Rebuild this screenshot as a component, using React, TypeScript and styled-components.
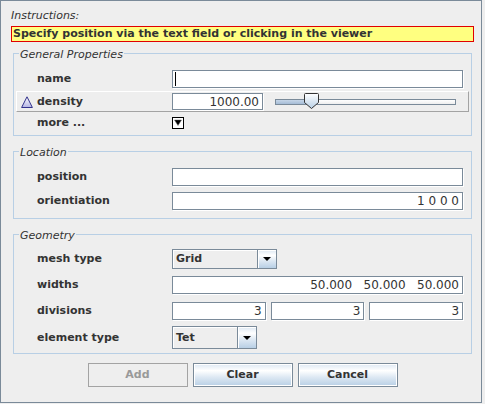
import React from 'react';
import styled, { createGlobalStyle } from 'styled-components';

const Global = createGlobalStyle`
  html, body { margin: 0; padding: 0; background: #eeeeee; }
  body { font-family: "DejaVu Sans", sans-serif; color: #333333; }
  * { box-sizing: border-box; }
`;

const Dialog = styled.div`
  width: 482px;
  height: 403px;
  border: 1px solid #7a8a99;
  background: #eeeeee;
  padding: 7px 7px 0 10px;
  display: flex;
  flex-direction: column;
`;

const Caption = styled.div`
  font: italic 11px/16px "DejaVu Sans", sans-serif;
  color: #333333;
  height: 16px;
  margin-bottom: 2px;
`;

const Banner = styled.div`
  height: 16px;
  border: 1px solid #e00000;
  background: #ffff80;
  font: bold 11px/14px "DejaVu Sans", sans-serif;
  color: #333333;
  padding-left: 1px;
  white-space: nowrap;
`;

const Group = styled.fieldset<{ $mt: number }>`
  margin: ${p => p.$mt}px 2px 0;
  padding: 0;
  border: 1px solid #b8cfe5;
  min-width: 0;
`;

const Title = styled.legend`
  font: italic 11px/14px "DejaVu Sans", sans-serif;
  color: #333333;
  padding: 4px 1px 0;
  margin-left: 5px;
`;

const Body = styled.div<{ $pt: number; $pb: number }>`
  display: flex;
  flex-direction: column;
  padding: ${p => p.$pt}px 0 ${p => p.$pb}px;
`;

const Row = styled.div<{ $h: number; $mt?: number }>`
  display: flex;
  align-items: center;
  height: ${p => p.$h}px;
  margin-top: ${p => p.$mt ?? 0}px;
  padding: 0 8px 0 23px;
`;

const HighlightRow = styled.div<{ $mt?: number }>`
  display: flex;
  align-items: center;
  height: 21px;
  margin: ${p => p.$mt ?? 0}px 2px 0;
  border: 1px solid;
  border-color: #ffffff #a3a3a3 #a3a3a3 #ffffff;
  padding-left: 4px;
`;

const Label = styled.span`
  flex: none;
  width: 135px;
  font: bold 11px/14px "DejaVu Sans", sans-serif;
  color: #333333;
  white-space: nowrap;
`;

const IconBox = styled.span`
  display: flex;
  width: 12px;
  height: 12px;
  margin-right: 4px;
`;

const Field = styled.div<{ $w?: number; $h?: number }>`
  flex: ${p => (p.$w ? 'none' : '1 1 0')};
  width: ${p => (p.$w ? `${p.$w}px` : 'auto')};
  height: ${p => p.$h ?? 18}px;
  background: #ffffff;
  border: 1px solid #7a8a99;
  box-shadow: 1px 1px 0 #ffffff;
  font: 12px/16px "DejaVu Sans", sans-serif;
  color: #333333;
  text-align: right;
  padding: 0 3px;
  white-space: pre;
  overflow: hidden;
`;

const Caret = styled.span`
  display: block;
  width: 1px;
  height: 14px;
  margin: 1px 0 0 -1px;
  background: #000000;
`;

const FieldGroup = styled.div`
  flex: 1;
  display: flex;
  gap: 5px;
`;

const Combo = styled.div<{ $w: number; $h: number }>`
  display: flex;
  width: ${p => p.$w}px;
  height: ${p => p.$h}px;
  border: 1px solid #7a8a99;
`;

const ComboText = styled.div`
  flex: 1;
  display: flex;
  align-items: center;
  padding-left: 3px;
  background: #eeeeee;
  box-shadow: inset 1px 1px 0 #ffffff;
  font: bold 11px/14px "DejaVu Sans", sans-serif;
  color: #333333;
`;

const ComboButton = styled.div`
  width: 19px;
  flex: none;
  display: flex;
  align-items: center;
  justify-content: center;
  border-left: 1px solid #7a8a99;
  box-shadow: inset 1px 1px 0 #ffffff;
  background: linear-gradient(#dde8f3 0%, #ffffff 30%, #dde8f3 60%, #b8cfe5 100%);
`;

const Slider = styled.div`
  position: relative;
  margin-left: 12px;
  width: 181px;
  height: 19px;
  display: flex;
  align-items: center;
`;

const Track = styled.div`
  display: flex;
  width: 181px;
  height: 6px;
  border: 1px solid #7a8a99;
  background: linear-gradient(#ffffff, #eeeeee);
`;

const TrackFill = styled.div`
  height: 100%;
  background: linear-gradient(#c6d6e8, #a5bcd6);
`;

const Thumb = styled.svg`
  position: absolute;
  top: 1px;
  width: 15px;
  height: 16px;
`;

const ButtonBar = styled.div`
  display: flex;
  justify-content: center;
  gap: 5px;
  margin-top: 9px;
`;

const Button = styled.div<{ $disabled?: boolean }>`
  width: 100px;
  height: 24px;
  display: flex;
  align-items: center;
  justify-content: center;
  font: bold 11px/14px "DejaVu Sans", sans-serif;
  border: 1px solid ${p => (p.$disabled ? '#a3a3a3' : '#7a8a99')};
  color: ${p => (p.$disabled ? '#999999' : '#333333')};
  background: ${p =>
    p.$disabled
      ? '#eeeeee'
      : 'linear-gradient(#dde8f3 0%, #ffffff 30%, #dde8f3 60%, #b8cfe5 100%)'};
  box-shadow: ${p => (p.$disabled ? 'none' : 'inset 0 0 0 1px #ffffff')};
`;

const Arrow = () => (
  <svg width="8" height="4" viewBox="0 0 8 4">
    <polygon points="0,0 8,0 4,4" fill="#000" />
  </svg>
);

const DeltaIcon = () => (
  <svg width="12" height="12" viewBox="0 0 12 12">
    <defs>
      <linearGradient id="dg" x1="0" y1="0" x2="0" y2="1">
        <stop offset="0" stopColor="#ffffff" />
        <stop offset="1" stopColor="#b4b4e4" />
      </linearGradient>
    </defs>
    <polygon points="6,0.8 11.4,11.5 0.6,11.5" fill="url(#dg)" stroke="#33338c" strokeWidth="1" />
  </svg>
);

const ToggleIcon = () => (
  <svg width="12" height="12" viewBox="0 0 12 12">
    <rect x="0.5" y="0.5" width="11" height="11" fill="#ffffff" stroke="#000000" />
    <polygon points="2.5,3 9.5,3 6,8.5" fill="#000000" stroke="#666" strokeWidth="0.5" />
  </svg>
);

function DensitySlider({ value }: { value: number }) {
  const pos = Math.round(value * 181);
  return (
    <Slider>
      <Track>
        <TrackFill style={{ width: `${pos}px` }} />
      </Track>
      <Thumb viewBox="0 0 15 16" style={{ left: `${pos - 7}px` }}>
        <defs>
          <linearGradient id="tg" x1="0" y1="0" x2="0" y2="1">
            <stop offset="0" stopColor="#ffffff" />
            <stop offset="1" stopColor="#b8cfe5" />
          </linearGradient>
        </defs>
        <path
          d="M1.5,0.5 H13.5 Q14.5,0.5 14.5,1.5 V9.5 L7.5,15.5 L0.5,9.5 V1.5 Q0.5,0.5 1.5,0.5 Z"
          fill="url(#tg)"
          stroke="#333333"
        />
      </Thumb>
    </Slider>
  );
}

export default function App() {
  return (
    <>
      <Global />
      <Dialog>
        <Caption>Instructions:</Caption>
        <Banner>Specify position via the text field or clicking in the viewer</Banner>

        <Group $mt={2}>
          <Title>General Properties</Title>
          <Body $pt={7} $pb={2}>
            <Row $h={19}>
              <Label>name</Label>
              <Field $h={18}>
                <Caret />
              </Field>
            </Row>
            <HighlightRow $mt={3}>
              <IconBox>
                <DeltaIcon />
              </IconBox>
              <Label>density</Label>
              <Field $w={91} $h={17}>1000.00</Field>
              <DensitySlider value={0.2} />
            </HighlightRow>
            <Row $h={21}>
              <Label>more ...</Label>
              <ToggleIcon />
            </Row>
          </Body>
        </Group>

        <Group $mt={6}>
          <Title>Location</Title>
          <Body $pt={8} $pb={8}>
            <Row $h={18}>
              <Label>position</Label>
              <Field />
            </Row>
            <Row $h={18} $mt={6}>
              <Label>orientiation</Label>
              <Field>1 0 0 0</Field>
            </Row>
          </Body>
        </Group>

        <Group $mt={6}>
          <Title>Geometry</Title>
          <Body $pt={6} $pb={4}>
            <Row $h={20}>
              <Label>mesh type</Label>
              <Combo $w={105} $h={20}>
                <ComboText>Grid</ComboText>
                <ComboButton>
                  <Arrow />
                </ComboButton>
              </Combo>
            </Row>
            <Row $h={18} $mt={7}>
              <Label>widths</Label>
              <Field>{'50.000   50.000   50.000'}</Field>
            </Row>
            <Row $h={18} $mt={8}>
              <Label>divisions</Label>
              <FieldGroup>
                <Field>3</Field>
                <Field>3</Field>
                <Field>3</Field>
              </FieldGroup>
            </Row>
            <Row $h={23} $mt={6}>
              <Label>element type</Label>
              <Combo $w={85} $h={23}>
                <ComboText>Tet</ComboText>
                <ComboButton>
                  <Arrow />
                </ComboButton>
              </Combo>
            </Row>
          </Body>
        </Group>

        <ButtonBar>
          <Button $disabled>Add</Button>
          <Button>Clear</Button>
          <Button>Cancel</Button>
        </ButtonBar>
      </Dialog>
    </>
  );
}
